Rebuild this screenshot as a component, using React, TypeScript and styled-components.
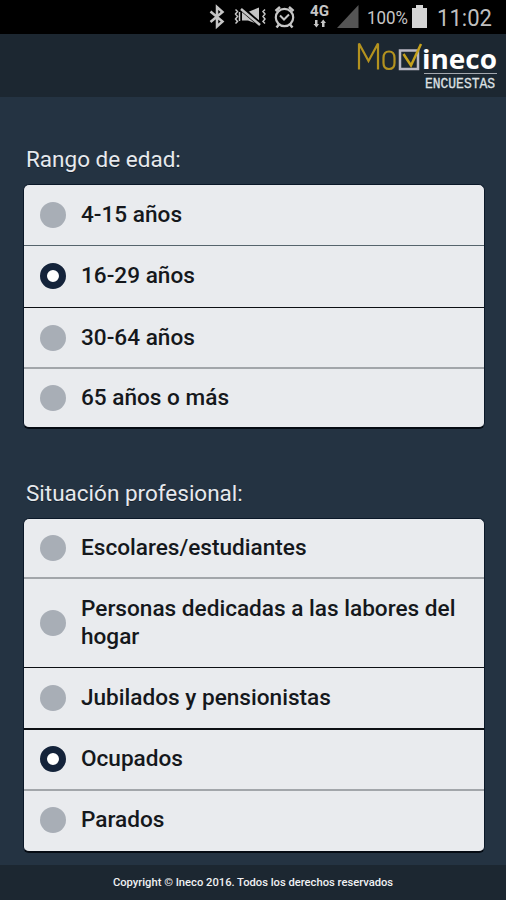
import React from "react";
import styled, { createGlobalStyle } from "styled-components";

const Global = createGlobalStyle`
  * { box-sizing: border-box; }
  body { margin: 0; background: #243342; font-family: Roboto, sans-serif; }
`;

const Screen = styled.div`
  width: 506px;
  height: 900px;
  display: flex;
  flex-direction: column;
  background: #243342;
  overflow: hidden;
`;

const StatusBar = styled.div`
  height: 34px;
  flex: none;
  background: #000;
`;

const Header = styled.header`
  height: 63px;
  flex: none;
  background: #1c2731;
  display: flex;
  justify-content: flex-end;
`;

const Content = styled.main`
  flex: 1;
  padding: 47px 21px 0 23px;
`;

const Section = styled.section<{ $gap?: number }>`
  margin-bottom: ${(p) => p.$gap ?? 0}px;
`;

const Title = styled.h2`
  margin: 0;
  padding-left: 3px;
  height: 40px;
  line-height: 30px;
  font-size: 22.5px;
  font-weight: 400;
  color: #e6e9ed;
  text-shadow: 0 1px 0 #15202c;
`;

const Panel = styled.div`
  width: 462px;
  border: 1px solid #0a1828;
  border-bottom: 2px solid #050b13;
  border-radius: 6px;
  background: #e9ebee;
  overflow: hidden;
`;

const Row = styled.div<{ $height: number; $line?: string; $thick?: number; $lift?: number }>`
  height: ${(p) => p.$height}px;
  display: flex;
  align-items: center;
  padding: 0 8px ${(p) => p.$lift ?? 0}px 16px;
  border-bottom: ${(p) => (p.$line ? `${p.$thick ?? 1}px solid ${p.$line}` : "none")};
`;

const Radio = styled.span<{ $on?: boolean }>`
  width: 26px;
  height: 26px;
  flex: none;
  border-radius: 50%;
  border: ${(p) => (p.$on ? "7px solid #14233a" : "0")};
  background: ${(p) => (p.$on ? "#fff" : "#a8aeb6")};
`;

const Label = styled.span`
  margin-left: 15px;
  font-size: 22.6px;
  line-height: 28px;
  font-weight: 500;
  color: #15181c;
  white-space: pre-line;
`;

const Footer = styled.footer`
  height: 35px;
  flex: none;
  background: #1c2731;
  color: #f0f1f3;
  font-size: 11.2px;
  font-weight: 500;
  line-height: 35px;
  text-align: center;
`;

const StatusIcons = () => (
  <svg width="506" height="34" fontFamily="Roboto, sans-serif" fill="#c6c6c6">
    <g fill="none" stroke="#c6c6c6" strokeWidth="2">
      <path d="M210.5 11.5L222.5 21.5L217 26.5V7L222.5 12L210.5 22" strokeWidth="2.5" />
      <path d="M235.500 9.500l2 2-2 2.500 2 2.500-2 2.500 2 2.500-2 2M239.500 12v9M265 9.500l-2 2 2 2.500-2 2.500 2 2.500-2 2.500 2 2" strokeWidth="1.5" />
      <circle cx="284.500" cy="17.500" r="8.700" strokeWidth="2.200" />
      <path d="M280 15.500l4 4 5-5" />
      <path d="M275.500 11l4.500-4M293.500 11l-4.500-4M279 24.500l-2.500 3M290 24.500l2.500 3" strokeWidth="2.500" />
    </g>
    <path d="M242 12h6l11-4.500v17l-11-4h-6z" />
    <path d="M240.500 7.500l19.500 17" stroke="#000" strokeWidth="5" />
    <path d="M241 9l19 16" stroke="#c6c6c6" strokeWidth="2.500" />
    <text x="310" y="16" fontSize="14.500" fontWeight="700" textLength="19" lengthAdjust="spacingAndGlyphs">4G</text>
    <path d="M315 20h2.500v4h1.500l-2.500 3.500-3-3.500h1.500zM322 27h2.500v-4h1.500l-2.800-3.500-2.700 3.500h1.500z" />
    <path d="M337 28L358.500 5V28z" fill="#555" />
    <text x="367" y="23.500" fontSize="17.500" textLength="41" lengthAdjust="spacingAndGlyphs">100%</text>
    <path d="M416 5h7v3h4v20h-15V8h4z" fill="#d5d5d5" />
    <text x="437" y="25.500" fontSize="24" textLength="55" lengthAdjust="spacingAndGlyphs" fill="#bfbfbf">11:02</text>
  </svg>
);

const Logo = () => (
  <svg width="156" height="63">
    <path
      d="M9 35.500V9.500L18.500 27L28 9.500V35.500M33.500 24Q33.500 17.500 39 17.500T44.500 24V29Q44.500 35 39 35T33.500 29Z"
      fill="none"
      stroke="#b3921f"
      strokeWidth="2.200"
    />
    <rect x="50" y="16.500" width="18" height="18.500" fill="none" stroke="#b9b8c4" strokeWidth="2.500" />
    <path d="M53.500 20L61 31.500L71 10" fill="none" stroke="#c5a11c" strokeWidth="2.500" />
    <text x="72" y="35" fontFamily="Open Sans, sans-serif" fontWeight="700" fontSize="27" fill="#fff" textLength="75" lengthAdjust="spacingAndGlyphs">ineco</text>
    <path d="M74 39.500H147" stroke="#a4a9b0" strokeWidth="1.200" />
    <text x="75" y="54" fontFamily="Liberation Mono, monospace" fontWeight="400" fontSize="14" fill="#dde0e3" stroke="#dde0e3" strokeWidth=".3" textLength="70" lengthAdjust="spacingAndGlyphs">ENCUESTAS</text>
  </svg>
);

const BLACK = "#0d1014";
const GRAY = "#a2a6aa";

type Option = { label: string; height: number; on?: boolean; line?: string; thick?: number; lift?: number };

const ages: Option[] = [
  { label: "4-15 años", height: 61, line: "#56646c" },
  { label: "16-29 años", height: 62, on: true, line: BLACK, lift: 2 },
  { label: "30-64 años", height: 61, line: GRAY, thick: 2 },
  { label: "65 años o más", height: 58 },
];

const jobs: Option[] = [
  { label: "Escolares/estudiantes", height: 60, line: GRAY, thick: 2 },
  { label: "Personas dedicadas a las labores del\nhogar", height: 89, line: BLACK },
  { label: "Jubilados y pensionistas", height: 62, line: BLACK, thick: 2 },
  { label: "Ocupados", height: 61, on: true, line: GRAY, thick: 2, lift: 1 },
  { label: "Parados", height: 60, lift: 2 },
];

const Options = ({ items }: { items: Option[] }) => (
  <Panel>
    {items.map((o) => (
      <Row key={o.label} $height={o.height} $line={o.line} $thick={o.thick} $lift={o.lift}>
        <Radio $on={o.on} />
        <Label>{o.label}</Label>
      </Row>
    ))}
  </Panel>
);

export default function App() {
  return (
    <Screen>
      <Global />
      <StatusBar>
        <StatusIcons />
      </StatusBar>
      <Header>
        <Logo />
      </Header>
      <Content>
        <Section $gap={49}>
          <Title>Rango de edad:</Title>
          <Options items={ages} />
        </Section>
        <Section>
          <Title>Situación profesional:</Title>
          <Options items={jobs} />
        </Section>
      </Content>
      <Footer>Copyright © Ineco 2016. Todos los derechos reservados</Footer>
    </Screen>
  );
}
